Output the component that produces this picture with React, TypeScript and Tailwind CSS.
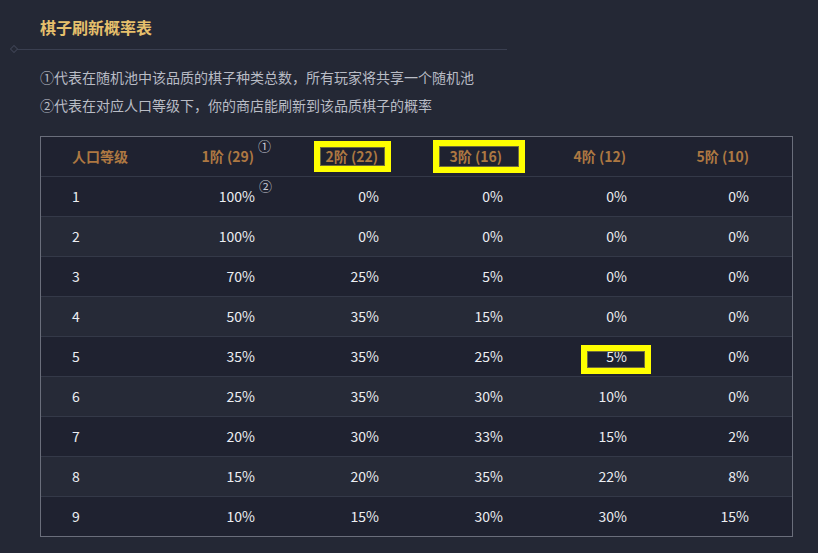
import React from 'react';

const tiers = ['1阶 (29)', '2阶 (22)', '3阶 (16)', '4阶 (12)', '5阶 (10)'];

const rows: string[][] = [
  ['1', '100%', '0%', '0%', '0%', '0%'],
  ['2', '100%', '0%', '0%', '0%', '0%'],
  ['3', '70%', '25%', '5%', '0%', '0%'],
  ['4', '50%', '35%', '15%', '0%', '0%'],
  ['5', '35%', '35%', '25%', '5%', '0%'],
  ['6', '25%', '35%', '30%', '10%', '0%'],
  ['7', '20%', '30%', '33%', '15%', '2%'],
  ['8', '15%', '20%', '35%', '22%', '8%'],
  ['9', '10%', '15%', '30%', '30%', '15%'],
];

const Mark: React.FC<{ children: React.ReactNode }> = ({ children }) => (
  <span className="absolute left-full top-[-7px] ml-[4px] text-[13px] leading-none font-normal text-[#c9ccd3]">
    {children}
  </span>
);

const Highlight: React.FC<{ className: string }> = ({ className }) => (
  <div className={`absolute border-[6px] border-[#ffff00] pointer-events-none ${className}`}>
    <div className="w-full h-full border border-[#6f6c3c]" />
  </div>
);

const App: React.FC = () => {
  return (
    <div
      className="w-[818px] h-[553px] overflow-hidden bg-[#242835] pt-[16px]"
      style={{ fontFamily: '"Noto Sans CJK SC", "Noto Sans", sans-serif' }}
    >
      <h1 className="pl-[40px] text-[16px] leading-[22px] font-bold text-[#e6c06c]">棋子刷新概率表</h1>

      <div className="ml-[11px] mt-[8px] w-[496px] flex items-center">
        <div className="w-[6px] h-[6px] rotate-45 border border-[#3d4253]" />
        <div className="flex-1 h-px bg-[#3a3f50]" />
      </div>

      <div className="pl-[40px] mt-[11px] text-[14px] leading-[28px] text-[#b9bcc5]">
        <p>①代表在随机池中该品质的棋子种类总数，所有玩家将共享一个随机池</p>
        <p>②代表在对应人口等级下，你的商店能刷新到该品质棋子的概率</p>
      </div>

      <div className="relative ml-[40px] mt-[17px] w-[753px] border border-[#6a6e7b]">
        <div className="grid grid-cols-[133px_repeat(5,124px)] h-[39px] items-center bg-[#1f2230] text-[14px] font-bold text-[#ad7842]">
          <div className="pl-[31px]">人口等级</div>
          {tiers.map((t, i) => (
            <div key={t} className={`text-right ${i === 4 ? 'pr-[45px]' : 'pr-[44px]'}`}>
              <span className="relative">
                {t}
                {i === 0 && <Mark>①</Mark>}
              </span>
            </div>
          ))}
        </div>

        {rows.map((r, ri) => (
          <div
            key={r[0]}
            className={`grid grid-cols-[133px_repeat(5,124px)] h-[40px] items-center border-t border-[#343948] text-[14px] text-[#eceef2] ${
              ri % 2 === 0 ? 'bg-[#1f2230]' : 'bg-[#262a37]'
            }`}
          >
            <div className="pl-[31px]">{r[0]}</div>
            {r.slice(1).map((v, ci) => (
              <div key={ci} className={`text-right ${ci === 4 ? 'pr-[45px]' : 'pr-[43px]'}`}>
                <span className="relative">
                  {v}
                  {ri === 0 && ci === 0 && <Mark>②</Mark>}
                </span>
              </div>
            ))}
          </div>
        ))}

        <Highlight className="left-[273px] top-[4px] w-[77px] h-[31px]" />
        <Highlight className="left-[392px] top-[3px] w-[92px] h-[33px]" />
        <Highlight className="left-[540px] top-[208px] w-[70px] h-[29px]" />
      </div>
    </div>
  );
};

export default App;
